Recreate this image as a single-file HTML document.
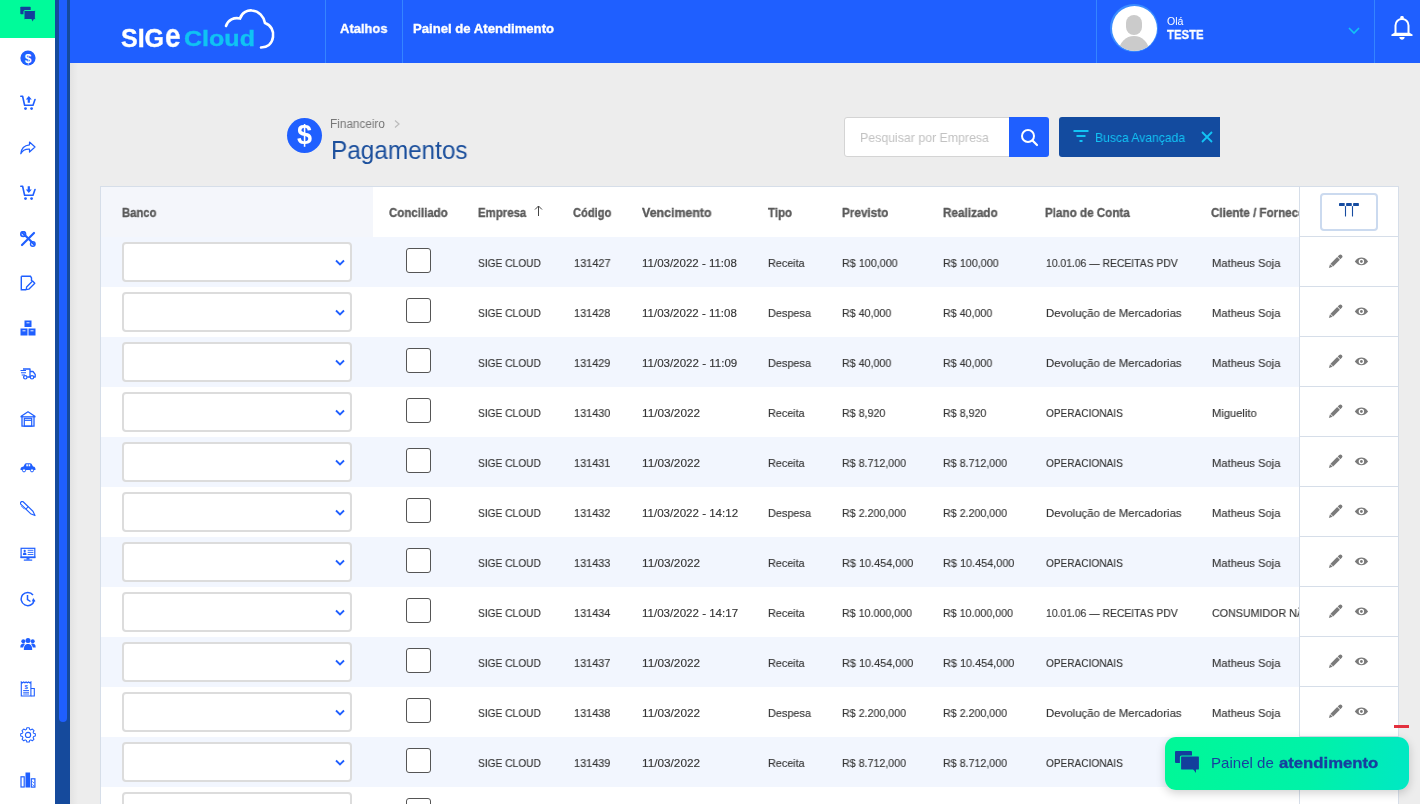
<!DOCTYPE html>
<html><head><meta charset="utf-8">
<style>
*{box-sizing:border-box;margin:0;padding:0}
html,body{width:1420px;height:804px;overflow:hidden;background:#ededed;font-family:"Liberation Sans",sans-serif;color:#444}
body{position:relative}
.abs{position:absolute}
.t{position:absolute;white-space:nowrap;line-height:1;transform-origin:0 0;will-change:transform}
.rb{-webkit-text-stroke:0.15px currentColor}
.xb{-webkit-text-stroke:0.35px currentColor}
</style></head><body>
<div class="abs" style="left:0;top:0;width:55px;height:804px;background:#fff"></div>
<div class="abs" style="left:0;top:0;width:55px;height:38px;background:#00fb9a"></div>
<svg class="abs" style="left:19.5px;top:50.3px" width="16" height="16" viewBox="0 0 16 16"><circle cx="8" cy="8" r="7.6" fill="#1f5fff"/><text x="8" y="12.6" font-family="Liberation Sans" font-weight="bold" font-size="12" fill="#fff" text-anchor="middle">$</text></svg>
<svg class="abs" style="left:19.5px;top:95.0px" width="16" height="16" viewBox="0 0 16 16"><path d="M0.8 1.3 H2.6 L4.6 10.2 H13 L15 4.5" fill="none" stroke="#1f5fff" stroke-width="1.6" stroke-linejoin="round" stroke-linecap="round"/><circle cx="5.5" cy="13.6" r="1.4" fill="#1f5fff"/><circle cx="11.6" cy="13.6" r="1.4" fill="#1f5fff"/><path d="M8.8 1 L5.8 4.4 H7.7 V7.8 H9.9 V4.4 H11.8Z" fill="#1f5fff"/></svg>
<svg class="abs" style="left:19.5px;top:140.4px" width="16" height="16" viewBox="0 0 16 16"><path d="M9.5 2 L15 7 L9.5 12 V9.2 C5 9 2.3 10.5 0.8 13.8 C1.2 8.5 4 5.3 9.5 4.8Z" fill="none" stroke="#1f5fff" stroke-width="1.2" stroke-linejoin="round"/></svg>
<svg class="abs" style="left:19.5px;top:185.2px" width="16" height="16" viewBox="0 0 16 16"><path d="M0.8 1.3 H2.6 L4.6 10.2 H13 L15 4.5" fill="none" stroke="#1f5fff" stroke-width="1.6" stroke-linejoin="round" stroke-linecap="round"/><circle cx="5.5" cy="13.6" r="1.4" fill="#1f5fff"/><circle cx="11.6" cy="13.6" r="1.4" fill="#1f5fff"/><path d="M8.8 8 L5.8 4.6 H7.7 V1.2 H9.9 V4.6 H11.8Z" fill="#1f5fff"/></svg>
<svg class="abs" style="left:19.5px;top:230.5px" width="16" height="16" viewBox="0 0 16 16"><path d="M2 14 L14 2" stroke="#1f5fff" stroke-width="2.2" stroke-linecap="round"/><path d="M2.5 1.8 L14 13.2" stroke="#1f5fff" stroke-width="2.2" stroke-linecap="round"/><circle cx="3.2" cy="3" r="2.4" fill="none" stroke="#1f5fff" stroke-width="1.6"/><circle cx="12.8" cy="12.9" r="2.3" fill="none" stroke="#1f5fff" stroke-width="1.4"/></svg>
<svg class="abs" style="left:19.5px;top:275.2px" width="16" height="16" viewBox="0 0 16 16"><path d="M1.3 1.3 H10.5 L11.5 3 V6 M6 14.7 H1.3 V1.3" fill="none" stroke="#1f5fff" stroke-width="1.4"/><path d="M6.2 14.5 L6.6 12 L12.6 6 L14.8 8.2 L8.8 14.2Z" fill="none" stroke="#1f5fff" stroke-width="1.3" stroke-linejoin="round"/></svg>
<svg class="abs" style="left:19.5px;top:320.4px" width="16" height="16" viewBox="0 0 16 16"><rect x="4.5" y="0.5" width="7" height="6.5" fill="#1f5fff"/><rect x="0.5" y="8.5" width="7" height="7" fill="#1f5fff"/><rect x="8.5" y="8.5" width="7" height="7" fill="#1f5fff"/><path d="M6.5 2.8 H9.5 M2.5 10.8 H5.5 M10.5 10.8 H13.5" stroke="#fff" stroke-width="0.9"/></svg>
<svg class="abs" style="left:19.5px;top:366.2px" width="16" height="16" viewBox="0 0 16 16"><path d="M3 3 H10 V11 M10 5.5 H13 L15.2 8.3 V11 H13.8 M10 11 H7.3 M3.6 11 H3" fill="none" stroke="#1f5fff" stroke-width="1.3" stroke-linejoin="round"/><circle cx="5.3" cy="11.3" r="1.7" fill="none" stroke="#1f5fff" stroke-width="1.2"/><circle cx="12" cy="11.3" r="1.7" fill="none" stroke="#1f5fff" stroke-width="1.2"/><path d="M0.5 4.5 H6 M1 6.8 H6 M1.7 9 H5" stroke="#1f5fff" stroke-width="1.1"/></svg>
<svg class="abs" style="left:19.5px;top:411.2px" width="16" height="16" viewBox="0 0 16 16"><path d="M0.8 5.5 L8 0.8 L15.2 5.5" fill="none" stroke="#1f5fff" stroke-width="1.3" stroke-linejoin="round"/><path d="M2 5 V15.2 H14 V5" fill="none" stroke="#1f5fff" stroke-width="1.3"/><rect x="4.3" y="7.3" width="7.4" height="7.9" fill="none" stroke="#1f5fff" stroke-width="1.2"/><path d="M4.3 9.3 H11.7" stroke="#1f5fff" stroke-width="1.2"/><path d="M0.5 5.8 H15.5" stroke="#1f5fff" stroke-width="1.2"/></svg>
<svg class="abs" style="left:19.5px;top:456.5px" width="16" height="16" viewBox="0 0 16 16"><path d="M0.5 13 C0.5 10.5 1 10 3.5 9.5 L5 6.8 C5.3 6.4 5.6 6.2 6.2 6.2 H10.2 C10.8 6.2 11.2 6.4 11.5 6.8 L13 9.5 C15 9.8 15.5 10.5 15.5 13Z" fill="#1f5fff"/><rect x="6.3" y="7.3" width="1.6" height="2" fill="#fff"/><rect x="8.6" y="7.3" width="1.6" height="2" fill="#fff"/><circle cx="4" cy="13.3" r="1.6" fill="#fff" stroke="#1f5fff" stroke-width="1"/><circle cx="12" cy="13.3" r="1.6" fill="#fff" stroke="#1f5fff" stroke-width="1"/></svg>
<svg class="abs" style="left:19.5px;top:501.4px" width="16" height="16" viewBox="0 0 16 16"><g transform="translate(2.2 2.2) rotate(44)"><path d="M0 -1.7 H13.3 L17.8 0 L13.3 1.7 H0 A1.7 1.7 0 0 1 0 -1.7Z" fill="none" stroke="#1f5fff" stroke-width="1.15" stroke-linejoin="round"/><path d="M6.8 -1.7 V1.7" stroke="#1f5fff" stroke-width="1"/><path d="M1 2.9 H5.8" stroke="#1f5fff" stroke-width="0.8" opacity="0.7"/></g></svg>
<svg class="abs" style="left:19.5px;top:546.3px" width="16" height="16" viewBox="0 0 16 16"><rect x="1.1" y="2.3" width="13.7" height="9.2" fill="none" stroke="#1f5fff" stroke-width="1.2"/><rect x="0.5" y="10.4" width="14.9" height="1.7" fill="#1f5fff"/><circle cx="4.7" cy="5" r="1.15" fill="#1f5fff"/><path d="M2.9 8.9 C2.9 7 3.6 6.4 4.7 6.4 C5.8 6.4 6.5 7 6.5 8.9Z" fill="#1f5fff"/><path d="M7.7 4.3 H13.4 M7.7 6.4 H13.4 M7.7 8.5 H13.4" stroke="#1f5fff" stroke-width="0.9"/><rect x="6.5" y="12.1" width="3" height="1.5" fill="#1f5fff"/><rect x="3.8" y="13.5" width="8.4" height="1.2" fill="#1f5fff"/></svg>
<svg class="abs" style="left:19.5px;top:591.0px" width="16" height="16" viewBox="0 0 16 16"><path d="M14.2 9.5 A6.6 6.6 0 1 1 13 4" fill="none" stroke="#1f5fff" stroke-width="1.5"/><path d="M13.2 7 L15.6 10.2 L11.8 10.5Z" fill="#1f5fff"/><path d="M7.5 4 V8.5 L10.5 10.5" fill="none" stroke="#1f5fff" stroke-width="1.5"/></svg>
<svg class="abs" style="left:19.5px;top:635.8px" width="16" height="16" viewBox="0 0 16 16"><circle cx="8" cy="4.5" r="2.5" fill="#1f5fff"/><circle cx="3.3" cy="5.2" r="2" fill="#1f5fff"/><circle cx="12.7" cy="5.2" r="2" fill="#1f5fff"/><path d="M3.8 14 C3.8 9.5 5.5 8 8 8 C10.5 8 12.2 9.5 12.2 14Z" fill="#1f5fff"/><path d="M0.3 11.5 C0.3 8.5 1.5 7.5 3.5 7.5 C4.5 7.5 5 8 5 8 C3.5 9.5 3.3 11 3.2 11.5Z" fill="#1f5fff"/><path d="M15.7 11.5 C15.7 8.5 14.5 7.5 12.5 7.5 C11.5 7.5 11 8 11 8 C12.5 9.5 12.7 11 12.8 11.5Z" fill="#1f5fff"/></svg>
<svg class="abs" style="left:19.5px;top:681.2px" width="16" height="16" viewBox="0 0 16 16"><path d="M1.3 1 L2.5 1.8 L3.7 1 L4.9 1.8 L6.1 1 L7.3 1.8 L8.5 1 L9.7 1.8 L10.9 1 V15 H1.3Z" fill="none" stroke="#1f5fff" stroke-width="1.1"/><path d="M10.9 7.5 H14.3 V15 H10.9" fill="none" stroke="#1f5fff" stroke-width="1.1"/><path d="M3.2 9.5 H9 M3.2 11.3 H9 M3.2 13 H9" stroke="#1f5fff" stroke-width="0.9"/><text x="6.1" y="7.6" font-family="Liberation Sans" font-size="6" font-weight="bold" fill="#1f5fff" text-anchor="middle">$</text></svg>
<svg class="abs" style="left:19.5px;top:726.5px" width="16" height="16" viewBox="0 0 16 16"><g transform="translate(0.5 0) scale(0.94 0.92)"><path d="M6.7 0.8 H9.3 L9.7 2.6 L11 3.2 L12.6 2.2 L14.4 4 L13.4 5.6 L14 6.9 L15.8 7.3 V9.9 L14 10.3 L13.4 11.6 L14.4 13.2 L12.6 15 L11 14 L9.7 14.6 L9.3 16.4 H6.7 L6.3 14.6 L5 14 L3.4 15 L1.6 13.2 L2.6 11.6 L2 10.3 L0.2 9.9 V7.3 L2 6.9 L2.6 5.6 L1.6 4 L3.4 2.2 L5 3.2 L6.3 2.6Z" fill="none" stroke="#1f5fff" stroke-width="1.1" stroke-linejoin="round"/><circle cx="8" cy="8.6" r="2.8" fill="none" stroke="#1f5fff" stroke-width="1.2"/></g></svg>
<svg class="abs" style="left:19.5px;top:771.5px" width="16" height="16" viewBox="0 0 16 16"><rect x="1" y="4.8" width="3.2" height="10.2" fill="none" stroke="#1f5fff" stroke-width="1.2"/><rect x="5.5" y="0.5" width="4.6" height="15" fill="#1f5fff"/><rect x="11.3" y="6.8" width="3.6" height="8.3" fill="none" stroke="#1f5fff" stroke-width="1.2"/><path d="M12.3 9.5 L14 11 M12.3 12.5 L14 14" stroke="#1f5fff" stroke-width="0.8"/></svg>
<svg class="abs" style="left:20px;top:5.5px" width="17" height="17" viewBox="0 0 17 17"><rect x="0.3" y="0.8" width="10.4" height="7.5" rx="0.8" fill="#133f9c"/><rect x="4" y="4.5" width="11.4" height="9" rx="0.8" fill="#133f9c" stroke="#00fb9a" stroke-width="1"/><path d="M11.5 13 L12.6 15.4 L13.8 13Z" fill="#133f9c"/></svg>
<div class="abs" style="left:55px;top:0;width:15px;height:804px;background:#154a9c"></div>
<div class="abs" style="left:59px;top:0;width:8px;height:722px;background:#1f5fff;border-radius:0 0 4px 4px"></div>
<div class="abs" style="left:70px;top:0;width:1350px;height:63px;background:#1f5fff"></div>
<div class="abs" style="left:325px;top:0;width:1px;height:63px;background:#3585ff"></div>
<div class="abs" style="left:402px;top:0;width:1px;height:63px;background:#3585ff"></div>
<div class="abs" style="left:1096px;top:0;width:1px;height:63px;background:#3585ff"></div>
<div class="abs" style="left:1374px;top:0;width:1px;height:63px;background:#3585ff"></div>
<div class="t xb" style="left:340.00px;top:22.00px;font-size:13px;font-weight:bold;color:#fff;transform:scaleX(0.9949);">Atalhos</div>
<div class="t xb" style="left:413.30px;top:22.00px;font-size:13px;font-weight:bold;color:#fff;transform:scaleX(1.0099);">Painel de Atendimento</div>
<div class="t xb" style="left:121.00px;top:25.54px;font-size:25px;font-weight:bold;color:#fff;">SIG</div>
<div class="t xb" style="left:165.30px;top:17.92px;font-size:34px;font-weight:bold;color:#fff;transform:scaleX(0.8214);">e</div>
<div class="t xb" style="left:184.00px;top:28.08px;font-size:22px;font-weight:bold;color:#10c3f3;transform:scaleX(1.1384);">Cloud</div>
<svg class="abs" style="left:215px;top:0.8px" width="70" height="55" viewBox="0 0 70 55"><path d="M11 25 C13 19 19 16 25 17.5 C27 11 33 9 37 9.5 C44 10 49 16 50 22 C56 24 59 30 58 36 C57 43 52 46.5 46 46.5" fill="none" stroke="#fff" stroke-width="2.6" stroke-linecap="round"/></svg>
<div class="abs" style="left:1110px;top:4px;width:48px;height:48px;border-radius:50%;background:#3a8cff"></div>
<div class="abs" style="left:1111.5px;top:5.5px;width:45px;height:45px;border-radius:50%;background:#fff;overflow:hidden"><div class="abs" style="left:14.5px;top:9.5px;width:16px;height:20px;border-radius:8px;background:#cbcbcb"></div><div class="abs" style="left:7.5px;top:30.5px;width:30px;height:22px;border-radius:15px 15px 0 0;background:#cbcbcb"></div></div>
<div class="t" style="left:1167.00px;top:17.04px;font-size:10px;color:#fff;transform:scaleX(1.0577);">Olá</div>
<div class="t xb" style="left:1166.50px;top:27.57px;font-size:13.5px;font-weight:bold;color:#fff;transform:scaleX(0.8407);">TESTE</div>
<svg class="abs" style="left:1346px;top:25px" width="16" height="12" viewBox="0 0 16 12"><path d="M3 3 L8 8 L13 3" fill="none" stroke="#12c3f5" stroke-width="1.6"/></svg>
<svg class="abs" style="left:1388px;top:13px" width="28" height="30" viewBox="0 0 28 30"><rect x="12.3" y="3" width="3.4" height="4" rx="1.2" fill="#fff"/><path d="M7.5 21.5 V12.5 C7.5 8.5 10.5 6 14 6 C17.5 6 20.5 8.5 20.5 12.5 V21.5" fill="none" stroke="#fff" stroke-width="2"/><path d="M4 22.2 L6.5 20.5 H21.5 L24 22.2 Z" fill="#fff" stroke="#fff" stroke-width="1.5" stroke-linejoin="round"/><path d="M11.3 24 H16.7 C16.5 25.8 15.3 26.8 14 26.8 C12.7 26.8 11.5 25.8 11.3 24Z" fill="#fff"/></svg>
<div class="abs" style="left:70px;top:63px;width:8px;height:741px;background:linear-gradient(to right,rgba(0,0,0,0.045),rgba(0,0,0,0))"></div>
<div class="abs" style="left:287px;top:118px;width:35px;height:35px;border-radius:50%;background:#1f5fff"></div>
<div class="t" style="left:295px;top:121px;font-size:27px;font-weight:bold;color:#fff;width:19px;text-align:center;line-height:28px">$</div>
<div class="t" style="left:330.00px;top:117.84px;font-size:12px;color:#777;transform:scaleX(0.9814);">Financeiro</div>
<svg class="abs" style="left:392px;top:118px" width="10" height="12" viewBox="0 0 10 12"><path d="M3 2.5 L7 6 L3 9.5" fill="none" stroke="#bbb" stroke-width="1.2"/></svg>
<div class="t" style="left:331.40px;top:138.14px;font-size:25px;color:#1b4f9c;transform:scaleX(0.9731);">Pagamentos</div>
<div class="abs" style="left:844px;top:117px;width:170px;height:40px;background:#fff;border:1px solid #d4d4d4;border-radius:3px"></div>
<div class="t" style="left:860.30px;top:131.00px;font-size:13px;color:#c2c2c2;transform:scaleX(0.9491);">Pesquisar por Empresa</div>
<div class="abs" style="left:1009px;top:117px;width:40px;height:40px;background:#1f5fff;border-radius:0 3px 3px 0"></div>
<svg class="abs" style="left:1016px;top:124px" width="26" height="26" viewBox="0 0 26 26"><circle cx="12" cy="12" r="6" fill="none" stroke="#fff" stroke-width="2"/><path d="M16.5 16.5 L21 21" stroke="#fff" stroke-width="2.2" stroke-linecap="round"/></svg>
<div class="abs" style="left:1059px;top:117px;width:161px;height:40px;background:#134b9f;border-radius:3px 0 0 3px"></div>
<svg class="abs" style="left:1072px;top:128px" width="20" height="18" viewBox="0 0 20 18"><path d="M1.5 3 H16.5 M4.5 8 H13.5 M7.5 13 H10.5" stroke="#12c3f5" stroke-width="2"/></svg>
<div class="t" style="left:1095.00px;top:131.00px;font-size:13px;color:#12c3f5;transform:scaleX(0.9311);">Busca Avançada</div>
<svg class="abs" style="left:1200px;top:130px" width="14" height="14" viewBox="0 0 14 14"><path d="M2 2 L12 12 M12 2 L2 12" stroke="#12c3f5" stroke-width="1.8"/></svg>
<div class="abs" style="left:100px;top:186px;width:1299px;height:700px;background:#fff;border:1px solid #d6dee9"></div>
<div class="abs" style="left:101px;top:187px;width:272px;height:50px;background:#f4f6fb"></div>
<div class="t xb" style="left:121.60px;top:206.72px;font-size:12.5px;font-weight:bold;color:#5a5a5a;transform:scaleX(0.9034);">Banco</div>
<div class="t xb" style="left:388.50px;top:206.72px;font-size:12.5px;font-weight:bold;color:#5a5a5a;transform:scaleX(0.9190);">Conciliado</div>
<div class="t xb" style="left:477.90px;top:206.72px;font-size:12.5px;font-weight:bold;color:#5a5a5a;transform:scaleX(0.9143);">Empresa</div>
<svg class="abs" style="left:532px;top:203px" width="12" height="14" viewBox="0 0 12 14"><path d="M6.5 3 V13 M3 6.5 L6.5 3 L10 6.5" fill="none" stroke="#444" stroke-width="1"/></svg>
<div class="t xb" style="left:573.40px;top:206.72px;font-size:12.5px;font-weight:bold;color:#5a5a5a;transform:scaleX(0.8894);">Código</div>
<div class="t xb" style="left:641.80px;top:206.72px;font-size:12.5px;font-weight:bold;color:#5a5a5a;transform:scaleX(0.9916);">Vencimento</div>
<div class="t xb" style="left:767.70px;top:206.72px;font-size:12.5px;font-weight:bold;color:#5a5a5a;transform:scaleX(0.9187);">Tipo</div>
<div class="t xb" style="left:841.80px;top:206.72px;font-size:12.5px;font-weight:bold;color:#5a5a5a;transform:scaleX(0.9389);">Previsto</div>
<div class="t xb" style="left:943.30px;top:206.72px;font-size:12.5px;font-weight:bold;color:#5a5a5a;transform:scaleX(0.9370);">Realizado</div>
<div class="t xb" style="left:1045.30px;top:206.72px;font-size:12.5px;font-weight:bold;color:#5a5a5a;transform:scaleX(0.9323);">Plano de Conta</div>
<div class="abs" style="left:1200px;top:187px;width:99px;height:50px;overflow:hidden"><div class="t xb" style="left:11.30px;top:19.72px;font-size:12.5px;font-weight:bold;color:#5a5a5a;transform:scaleX(0.9300);">Cliente / Fornecedor</div></div>
<div class="abs" style="left:101px;top:237px;width:1198px;height:50px;background:#f2f6fe"></div>
<div class="abs" style="left:122px;top:242px;width:230px;height:40px;background:#fff;border:2px solid #dcdcdc;border-radius:4px"></div>
<svg class="abs" style="left:333px;top:257px" width="14" height="12" viewBox="0 0 14 12"><path d="M3 3.5 L7 7.5 L11 3.5" fill="none" stroke="#1f5fff" stroke-width="1.8"/></svg>
<div class="abs" style="left:406px;top:248px;width:25px;height:25px;background:#fff;border:1px solid #555;border-radius:3px"></div>
<div class="t rb" style="left:477.50px;top:257.97px;font-size:11.5px;color:#353535;transform:scaleX(0.8851);">SIGE CLOUD</div>
<div class="t rb" style="left:573.50px;top:257.97px;font-size:11.5px;color:#353535;transform:scaleX(0.9543);">131427</div>
<div class="t rb" style="left:641.70px;top:257.97px;font-size:11.5px;color:#353535;">11/03/2022 - 11:08</div>
<div class="t rb" style="left:767.50px;top:257.97px;font-size:11.5px;color:#353535;transform:scaleX(0.9400);">Receita</div>
<div class="t rb" style="left:841.50px;top:257.97px;font-size:11.5px;color:#353535;transform:scaleX(0.9368);">R$ 100,000</div>
<div class="t rb" style="left:943.30px;top:257.97px;font-size:11.5px;color:#353535;transform:scaleX(0.9368);">R$ 100,000</div>
<div class="t rb" style="left:1045.50px;top:257.97px;font-size:11.5px;color:#353535;transform:scaleX(0.9010);">10.01.06 — RECEITAS PDV</div>
<div class="abs" style="left:1200px;top:237px;width:99px;height:50px;overflow:hidden"><div class="t rb" style="left:11.50px;top:20.97px;font-size:11.5px;color:#353535;transform:scaleX(0.9733);">Matheus Soja</div></div>
<div class="abs" style="left:122px;top:292px;width:230px;height:40px;background:#fff;border:2px solid #dcdcdc;border-radius:4px"></div>
<svg class="abs" style="left:333px;top:307px" width="14" height="12" viewBox="0 0 14 12"><path d="M3 3.5 L7 7.5 L11 3.5" fill="none" stroke="#1f5fff" stroke-width="1.8"/></svg>
<div class="abs" style="left:406px;top:298px;width:25px;height:25px;background:#fff;border:1px solid #555;border-radius:3px"></div>
<div class="t rb" style="left:477.50px;top:307.97px;font-size:11.5px;color:#353535;transform:scaleX(0.8851);">SIGE CLOUD</div>
<div class="t rb" style="left:573.50px;top:307.97px;font-size:11.5px;color:#353535;transform:scaleX(0.9480);">131428</div>
<div class="t rb" style="left:641.70px;top:307.97px;font-size:11.5px;color:#353535;">11/03/2022 - 11:08</div>
<div class="t rb" style="left:767.50px;top:307.97px;font-size:11.5px;color:#353535;transform:scaleX(0.9466);">Despesa</div>
<div class="t rb" style="left:841.50px;top:307.97px;font-size:11.5px;color:#353535;transform:scaleX(0.9280);">R$ 40,000</div>
<div class="t rb" style="left:943.30px;top:307.97px;font-size:11.5px;color:#353535;transform:scaleX(0.9280);">R$ 40,000</div>
<div class="t rb" style="left:1045.50px;top:307.97px;font-size:11.5px;color:#353535;transform:scaleX(0.9906);">Devolução de Mercadorias</div>
<div class="abs" style="left:1200px;top:287px;width:99px;height:50px;overflow:hidden"><div class="t rb" style="left:11.50px;top:20.97px;font-size:11.5px;color:#353535;transform:scaleX(0.9733);">Matheus Soja</div></div>
<div class="abs" style="left:101px;top:337px;width:1198px;height:50px;background:#f2f6fe"></div>
<div class="abs" style="left:122px;top:342px;width:230px;height:40px;background:#fff;border:2px solid #dcdcdc;border-radius:4px"></div>
<svg class="abs" style="left:333px;top:357px" width="14" height="12" viewBox="0 0 14 12"><path d="M3 3.5 L7 7.5 L11 3.5" fill="none" stroke="#1f5fff" stroke-width="1.8"/></svg>
<div class="abs" style="left:406px;top:348px;width:25px;height:25px;background:#fff;border:1px solid #555;border-radius:3px"></div>
<div class="t rb" style="left:477.50px;top:357.97px;font-size:11.5px;color:#353535;transform:scaleX(0.8851);">SIGE CLOUD</div>
<div class="t rb" style="left:573.50px;top:357.97px;font-size:11.5px;color:#353535;transform:scaleX(0.9480);">131429</div>
<div class="t rb" style="left:641.70px;top:357.97px;font-size:11.5px;color:#353535;transform:scaleX(1.0040);">11/03/2022 - 11:09</div>
<div class="t rb" style="left:767.50px;top:357.97px;font-size:11.5px;color:#353535;transform:scaleX(0.9466);">Despesa</div>
<div class="t rb" style="left:841.50px;top:357.97px;font-size:11.5px;color:#353535;transform:scaleX(0.9280);">R$ 40,000</div>
<div class="t rb" style="left:943.30px;top:357.97px;font-size:11.5px;color:#353535;transform:scaleX(0.9280);">R$ 40,000</div>
<div class="t rb" style="left:1045.50px;top:357.97px;font-size:11.5px;color:#353535;transform:scaleX(0.9906);">Devolução de Mercadorias</div>
<div class="abs" style="left:1200px;top:337px;width:99px;height:50px;overflow:hidden"><div class="t rb" style="left:11.50px;top:20.97px;font-size:11.5px;color:#353535;transform:scaleX(0.9733);">Matheus Soja</div></div>
<div class="abs" style="left:122px;top:392px;width:230px;height:40px;background:#fff;border:2px solid #dcdcdc;border-radius:4px"></div>
<svg class="abs" style="left:333px;top:407px" width="14" height="12" viewBox="0 0 14 12"><path d="M3 3.5 L7 7.5 L11 3.5" fill="none" stroke="#1f5fff" stroke-width="1.8"/></svg>
<div class="abs" style="left:406px;top:398px;width:25px;height:25px;background:#fff;border:1px solid #555;border-radius:3px"></div>
<div class="t rb" style="left:477.50px;top:407.97px;font-size:11.5px;color:#353535;transform:scaleX(0.8851);">SIGE CLOUD</div>
<div class="t rb" style="left:573.50px;top:407.97px;font-size:11.5px;color:#353535;transform:scaleX(0.9480);">131430</div>
<div class="t rb" style="left:641.70px;top:407.97px;font-size:11.5px;color:#353535;transform:scaleX(1.0230);">11/03/2022</div>
<div class="t rb" style="left:767.50px;top:407.97px;font-size:11.5px;color:#353535;transform:scaleX(0.9400);">Receita</div>
<div class="t rb" style="left:841.50px;top:407.97px;font-size:11.5px;color:#353535;transform:scaleX(0.9280);">R$ 8,920</div>
<div class="t rb" style="left:943.30px;top:407.97px;font-size:11.5px;color:#353535;transform:scaleX(0.9280);">R$ 8,920</div>
<div class="t rb" style="left:1045.50px;top:407.97px;font-size:11.5px;color:#353535;transform:scaleX(0.8770);">OPERACIONAIS</div>
<div class="abs" style="left:1200px;top:387px;width:99px;height:50px;overflow:hidden"><div class="t rb" style="left:11.50px;top:20.97px;font-size:11.5px;color:#353535;transform:scaleX(0.9690);">Miguelito</div></div>
<div class="abs" style="left:101px;top:437px;width:1198px;height:50px;background:#f2f6fe"></div>
<div class="abs" style="left:122px;top:442px;width:230px;height:40px;background:#fff;border:2px solid #dcdcdc;border-radius:4px"></div>
<svg class="abs" style="left:333px;top:457px" width="14" height="12" viewBox="0 0 14 12"><path d="M3 3.5 L7 7.5 L11 3.5" fill="none" stroke="#1f5fff" stroke-width="1.8"/></svg>
<div class="abs" style="left:406px;top:448px;width:25px;height:25px;background:#fff;border:1px solid #555;border-radius:3px"></div>
<div class="t rb" style="left:477.50px;top:457.97px;font-size:11.5px;color:#353535;transform:scaleX(0.8851);">SIGE CLOUD</div>
<div class="t rb" style="left:573.50px;top:457.97px;font-size:11.5px;color:#353535;transform:scaleX(0.9480);">131431</div>
<div class="t rb" style="left:641.70px;top:457.97px;font-size:11.5px;color:#353535;transform:scaleX(1.0230);">11/03/2022</div>
<div class="t rb" style="left:767.50px;top:457.97px;font-size:11.5px;color:#353535;transform:scaleX(0.9400);">Receita</div>
<div class="t rb" style="left:841.50px;top:457.97px;font-size:11.5px;color:#353535;transform:scaleX(0.9280);">R$ 8.712,000</div>
<div class="t rb" style="left:943.30px;top:457.97px;font-size:11.5px;color:#353535;transform:scaleX(0.9280);">R$ 8.712,000</div>
<div class="t rb" style="left:1045.50px;top:457.97px;font-size:11.5px;color:#353535;transform:scaleX(0.8770);">OPERACIONAIS</div>
<div class="abs" style="left:1200px;top:437px;width:99px;height:50px;overflow:hidden"><div class="t rb" style="left:11.50px;top:20.97px;font-size:11.5px;color:#353535;transform:scaleX(0.9733);">Matheus Soja</div></div>
<div class="abs" style="left:122px;top:492px;width:230px;height:40px;background:#fff;border:2px solid #dcdcdc;border-radius:4px"></div>
<svg class="abs" style="left:333px;top:507px" width="14" height="12" viewBox="0 0 14 12"><path d="M3 3.5 L7 7.5 L11 3.5" fill="none" stroke="#1f5fff" stroke-width="1.8"/></svg>
<div class="abs" style="left:406px;top:498px;width:25px;height:25px;background:#fff;border:1px solid #555;border-radius:3px"></div>
<div class="t rb" style="left:477.50px;top:507.97px;font-size:11.5px;color:#353535;transform:scaleX(0.8851);">SIGE CLOUD</div>
<div class="t rb" style="left:573.50px;top:507.97px;font-size:11.5px;color:#353535;transform:scaleX(0.9480);">131432</div>
<div class="t rb" style="left:641.70px;top:507.97px;font-size:11.5px;color:#353535;transform:scaleX(1.0040);">11/03/2022 - 14:12</div>
<div class="t rb" style="left:767.50px;top:507.97px;font-size:11.5px;color:#353535;transform:scaleX(0.9466);">Despesa</div>
<div class="t rb" style="left:841.50px;top:507.97px;font-size:11.5px;color:#353535;transform:scaleX(0.9280);">R$ 2.200,000</div>
<div class="t rb" style="left:943.30px;top:507.97px;font-size:11.5px;color:#353535;transform:scaleX(0.9280);">R$ 2.200,000</div>
<div class="t rb" style="left:1045.50px;top:507.97px;font-size:11.5px;color:#353535;transform:scaleX(0.9906);">Devolução de Mercadorias</div>
<div class="abs" style="left:1200px;top:487px;width:99px;height:50px;overflow:hidden"><div class="t rb" style="left:11.50px;top:20.97px;font-size:11.5px;color:#353535;transform:scaleX(0.9733);">Matheus Soja</div></div>
<div class="abs" style="left:101px;top:537px;width:1198px;height:50px;background:#f2f6fe"></div>
<div class="abs" style="left:122px;top:542px;width:230px;height:40px;background:#fff;border:2px solid #dcdcdc;border-radius:4px"></div>
<svg class="abs" style="left:333px;top:557px" width="14" height="12" viewBox="0 0 14 12"><path d="M3 3.5 L7 7.5 L11 3.5" fill="none" stroke="#1f5fff" stroke-width="1.8"/></svg>
<div class="abs" style="left:406px;top:548px;width:25px;height:25px;background:#fff;border:1px solid #555;border-radius:3px"></div>
<div class="t rb" style="left:477.50px;top:557.97px;font-size:11.5px;color:#353535;transform:scaleX(0.8851);">SIGE CLOUD</div>
<div class="t rb" style="left:573.50px;top:557.97px;font-size:11.5px;color:#353535;transform:scaleX(0.9480);">131433</div>
<div class="t rb" style="left:641.70px;top:557.97px;font-size:11.5px;color:#353535;transform:scaleX(1.0230);">11/03/2022</div>
<div class="t rb" style="left:767.50px;top:557.97px;font-size:11.5px;color:#353535;transform:scaleX(0.9400);">Receita</div>
<div class="t rb" style="left:841.50px;top:557.97px;font-size:11.5px;color:#353535;transform:scaleX(0.9464);">R$ 10.454,000</div>
<div class="t rb" style="left:943.30px;top:557.97px;font-size:11.5px;color:#353535;transform:scaleX(0.9464);">R$ 10.454,000</div>
<div class="t rb" style="left:1045.50px;top:557.97px;font-size:11.5px;color:#353535;transform:scaleX(0.8770);">OPERACIONAIS</div>
<div class="abs" style="left:1200px;top:537px;width:99px;height:50px;overflow:hidden"><div class="t rb" style="left:11.50px;top:20.97px;font-size:11.5px;color:#353535;transform:scaleX(0.9733);">Matheus Soja</div></div>
<div class="abs" style="left:122px;top:592px;width:230px;height:40px;background:#fff;border:2px solid #dcdcdc;border-radius:4px"></div>
<svg class="abs" style="left:333px;top:607px" width="14" height="12" viewBox="0 0 14 12"><path d="M3 3.5 L7 7.5 L11 3.5" fill="none" stroke="#1f5fff" stroke-width="1.8"/></svg>
<div class="abs" style="left:406px;top:598px;width:25px;height:25px;background:#fff;border:1px solid #555;border-radius:3px"></div>
<div class="t rb" style="left:477.50px;top:607.97px;font-size:11.5px;color:#353535;transform:scaleX(0.8851);">SIGE CLOUD</div>
<div class="t rb" style="left:573.50px;top:607.97px;font-size:11.5px;color:#353535;transform:scaleX(0.9480);">131434</div>
<div class="t rb" style="left:641.70px;top:607.97px;font-size:11.5px;color:#353535;transform:scaleX(1.0040);">11/03/2022 - 14:17</div>
<div class="t rb" style="left:767.50px;top:607.97px;font-size:11.5px;color:#353535;transform:scaleX(0.9400);">Receita</div>
<div class="t rb" style="left:841.50px;top:607.97px;font-size:11.5px;color:#353535;transform:scaleX(0.9280);">R$ 10.000,000</div>
<div class="t rb" style="left:943.30px;top:607.97px;font-size:11.5px;color:#353535;transform:scaleX(0.9280);">R$ 10.000,000</div>
<div class="t rb" style="left:1045.50px;top:607.97px;font-size:11.5px;color:#353535;transform:scaleX(0.9010);">10.01.06 — RECEITAS PDV</div>
<div class="abs" style="left:1200px;top:587px;width:99px;height:50px;overflow:hidden"><div class="t rb" style="left:11.50px;top:20.97px;font-size:11.5px;color:#353535;transform:scaleX(0.9300);">CONSUMIDOR NÃO IDENTIFICADO</div></div>
<div class="abs" style="left:101px;top:637px;width:1198px;height:50px;background:#f2f6fe"></div>
<div class="abs" style="left:122px;top:642px;width:230px;height:40px;background:#fff;border:2px solid #dcdcdc;border-radius:4px"></div>
<svg class="abs" style="left:333px;top:657px" width="14" height="12" viewBox="0 0 14 12"><path d="M3 3.5 L7 7.5 L11 3.5" fill="none" stroke="#1f5fff" stroke-width="1.8"/></svg>
<div class="abs" style="left:406px;top:648px;width:25px;height:25px;background:#fff;border:1px solid #555;border-radius:3px"></div>
<div class="t rb" style="left:477.50px;top:657.97px;font-size:11.5px;color:#353535;transform:scaleX(0.8851);">SIGE CLOUD</div>
<div class="t rb" style="left:573.50px;top:657.97px;font-size:11.5px;color:#353535;transform:scaleX(0.9480);">131437</div>
<div class="t rb" style="left:641.70px;top:657.97px;font-size:11.5px;color:#353535;transform:scaleX(1.0230);">11/03/2022</div>
<div class="t rb" style="left:767.50px;top:657.97px;font-size:11.5px;color:#353535;transform:scaleX(0.9400);">Receita</div>
<div class="t rb" style="left:841.50px;top:657.97px;font-size:11.5px;color:#353535;transform:scaleX(0.9464);">R$ 10.454,000</div>
<div class="t rb" style="left:943.30px;top:657.97px;font-size:11.5px;color:#353535;transform:scaleX(0.9464);">R$ 10.454,000</div>
<div class="t rb" style="left:1045.50px;top:657.97px;font-size:11.5px;color:#353535;transform:scaleX(0.8770);">OPERACIONAIS</div>
<div class="abs" style="left:1200px;top:637px;width:99px;height:50px;overflow:hidden"><div class="t rb" style="left:11.50px;top:20.97px;font-size:11.5px;color:#353535;transform:scaleX(0.9733);">Matheus Soja</div></div>
<div class="abs" style="left:122px;top:692px;width:230px;height:40px;background:#fff;border:2px solid #dcdcdc;border-radius:4px"></div>
<svg class="abs" style="left:333px;top:707px" width="14" height="12" viewBox="0 0 14 12"><path d="M3 3.5 L7 7.5 L11 3.5" fill="none" stroke="#1f5fff" stroke-width="1.8"/></svg>
<div class="abs" style="left:406px;top:698px;width:25px;height:25px;background:#fff;border:1px solid #555;border-radius:3px"></div>
<div class="t rb" style="left:477.50px;top:707.97px;font-size:11.5px;color:#353535;transform:scaleX(0.8851);">SIGE CLOUD</div>
<div class="t rb" style="left:573.50px;top:707.97px;font-size:11.5px;color:#353535;transform:scaleX(0.9480);">131438</div>
<div class="t rb" style="left:641.70px;top:707.97px;font-size:11.5px;color:#353535;transform:scaleX(1.0230);">11/03/2022</div>
<div class="t rb" style="left:767.50px;top:707.97px;font-size:11.5px;color:#353535;transform:scaleX(0.9466);">Despesa</div>
<div class="t rb" style="left:841.50px;top:707.97px;font-size:11.5px;color:#353535;transform:scaleX(0.9280);">R$ 2.200,000</div>
<div class="t rb" style="left:943.30px;top:707.97px;font-size:11.5px;color:#353535;transform:scaleX(0.9280);">R$ 2.200,000</div>
<div class="t rb" style="left:1045.50px;top:707.97px;font-size:11.5px;color:#353535;transform:scaleX(0.9906);">Devolução de Mercadorias</div>
<div class="abs" style="left:1200px;top:687px;width:99px;height:50px;overflow:hidden"><div class="t rb" style="left:11.50px;top:20.97px;font-size:11.5px;color:#353535;transform:scaleX(0.9733);">Matheus Soja</div></div>
<div class="abs" style="left:101px;top:737px;width:1198px;height:50px;background:#f2f6fe"></div>
<div class="abs" style="left:122px;top:742px;width:230px;height:40px;background:#fff;border:2px solid #dcdcdc;border-radius:4px"></div>
<svg class="abs" style="left:333px;top:757px" width="14" height="12" viewBox="0 0 14 12"><path d="M3 3.5 L7 7.5 L11 3.5" fill="none" stroke="#1f5fff" stroke-width="1.8"/></svg>
<div class="abs" style="left:406px;top:748px;width:25px;height:25px;background:#fff;border:1px solid #555;border-radius:3px"></div>
<div class="t rb" style="left:477.50px;top:757.97px;font-size:11.5px;color:#353535;transform:scaleX(0.8851);">SIGE CLOUD</div>
<div class="t rb" style="left:573.50px;top:757.97px;font-size:11.5px;color:#353535;transform:scaleX(0.9480);">131439</div>
<div class="t rb" style="left:641.70px;top:757.97px;font-size:11.5px;color:#353535;transform:scaleX(1.0230);">11/03/2022</div>
<div class="t rb" style="left:767.50px;top:757.97px;font-size:11.5px;color:#353535;transform:scaleX(0.9400);">Receita</div>
<div class="t rb" style="left:841.50px;top:757.97px;font-size:11.5px;color:#353535;transform:scaleX(0.9280);">R$ 8.712,000</div>
<div class="t rb" style="left:943.30px;top:757.97px;font-size:11.5px;color:#353535;transform:scaleX(0.9280);">R$ 8.712,000</div>
<div class="t rb" style="left:1045.50px;top:757.97px;font-size:11.5px;color:#353535;transform:scaleX(0.8770);">OPERACIONAIS</div>
<div class="abs" style="left:1200px;top:737px;width:99px;height:50px;overflow:hidden"><div class="t rb" style="left:11.50px;top:20.97px;font-size:11.5px;color:#353535;transform:scaleX(0.9733);">Matheus Soja</div></div>
<div class="abs" style="left:122px;top:792px;width:230px;height:40px;background:#fff;border:2px solid #dcdcdc;border-radius:4px"></div>
<svg class="abs" style="left:333px;top:807px" width="14" height="12" viewBox="0 0 14 12"><path d="M3 3.5 L7 7.5 L11 3.5" fill="none" stroke="#1f5fff" stroke-width="1.8"/></svg>
<div class="abs" style="left:406px;top:798px;width:25px;height:25px;background:#fff;border:1px solid #555;border-radius:3px"></div>
<div class="t rb" style="left:477.50px;top:807.97px;font-size:11.5px;color:#353535;transform:scaleX(0.8851);">SIGE CLOUD</div>
<div class="t rb" style="left:573.50px;top:807.97px;font-size:11.5px;color:#353535;transform:scaleX(0.9480);">131440</div>
<div class="t rb" style="left:641.70px;top:807.97px;font-size:11.5px;color:#353535;transform:scaleX(1.0230);">11/03/2022</div>
<div class="t rb" style="left:767.50px;top:807.97px;font-size:11.5px;color:#353535;transform:scaleX(0.9400);">Receita</div>
<div class="t rb" style="left:841.50px;top:807.97px;font-size:11.5px;color:#353535;transform:scaleX(0.9280);">R$ 8.712,000</div>
<div class="t rb" style="left:943.30px;top:807.97px;font-size:11.5px;color:#353535;transform:scaleX(0.9280);">R$ 8.712,000</div>
<div class="t rb" style="left:1045.50px;top:807.97px;font-size:11.5px;color:#353535;transform:scaleX(0.8770);">OPERACIONAIS</div>
<div class="abs" style="left:1200px;top:787px;width:99px;height:50px;overflow:hidden"><div class="t rb" style="left:11.50px;top:20.97px;font-size:11.5px;color:#353535;transform:scaleX(0.9733);">Matheus Soja</div></div>
<div class="abs" style="left:1299px;top:187px;width:99px;height:617px;background:#fff;border-left:1px solid #d6dee9"></div>
<div class="abs" style="left:1300px;top:236px;width:98px;height:1px;background:#d6dee9"></div>
<div class="abs" style="left:1300px;top:286px;width:98px;height:1px;background:#d6dee9"></div>
<div class="abs" style="left:1300px;top:336px;width:98px;height:1px;background:#d6dee9"></div>
<div class="abs" style="left:1300px;top:386px;width:98px;height:1px;background:#d6dee9"></div>
<div class="abs" style="left:1300px;top:436px;width:98px;height:1px;background:#d6dee9"></div>
<div class="abs" style="left:1300px;top:486px;width:98px;height:1px;background:#d6dee9"></div>
<div class="abs" style="left:1300px;top:536px;width:98px;height:1px;background:#d6dee9"></div>
<div class="abs" style="left:1300px;top:586px;width:98px;height:1px;background:#d6dee9"></div>
<div class="abs" style="left:1300px;top:636px;width:98px;height:1px;background:#d6dee9"></div>
<div class="abs" style="left:1300px;top:686px;width:98px;height:1px;background:#d6dee9"></div>
<div class="abs" style="left:1300px;top:736px;width:98px;height:1px;background:#d6dee9"></div>
<div class="abs" style="left:1300px;top:786px;width:98px;height:1px;background:#d6dee9"></div>
<div class="abs" style="left:1300px;top:836px;width:98px;height:1px;background:#d6dee9"></div>
<div class="abs" style="left:1320px;top:193px;width:58px;height:38px;border:2px solid #cbdaef;border-radius:4px;background:#fff"></div>
<svg class="abs" style="left:1335px;top:200px" width="28" height="20" viewBox="0 0 28 20"><g fill="#164ca0"><rect x="4" y="3" width="5.7" height="2.9" rx="0.4"/><rect x="11.1" y="3" width="5.7" height="2.9" rx="0.4"/><rect x="18.1" y="3" width="5.8" height="2.9" rx="0.4"/><rect x="9.95" y="5.9" width="1.1" height="10.6" rx="0.5"/><rect x="16.95" y="5.9" width="1.1" height="10.6" rx="0.5"/></g></svg>
<svg class="abs" style="left:1326px;top:253px" width="18" height="18" viewBox="0 0 18 18"><g transform="translate(2.9 14.9) rotate(-44.5)" fill="#7a7a7a"><path d="M0 0 L3.4 -1.9 V1.9Z"/><rect x="4.1" y="-1.9" width="9.4" height="3.8"/><path d="M14.2 -1.9 H16.3 A1.9 1.9 0 0 1 16.3 1.9 H14.2Z"/></g></svg>
<svg class="abs" style="left:1353px;top:254px" width="17" height="16" viewBox="0 0 17 16"><path d="M1.8 7.5 C4 4.6 6 3.6 8.45 3.6 C10.9 3.6 12.9 4.6 15.1 7.5 C12.9 10.4 10.9 11.3 8.45 11.3 C6 11.3 4 10.4 1.8 7.5Z" fill="#7a7a7a"/><circle cx="8.4" cy="7.5" r="2.7" fill="#fff"/><circle cx="8.4" cy="7.5" r="1.4" fill="#7a7a7a"/></svg>
<svg class="abs" style="left:1326px;top:303px" width="18" height="18" viewBox="0 0 18 18"><g transform="translate(2.9 14.9) rotate(-44.5)" fill="#7a7a7a"><path d="M0 0 L3.4 -1.9 V1.9Z"/><rect x="4.1" y="-1.9" width="9.4" height="3.8"/><path d="M14.2 -1.9 H16.3 A1.9 1.9 0 0 1 16.3 1.9 H14.2Z"/></g></svg>
<svg class="abs" style="left:1353px;top:304px" width="17" height="16" viewBox="0 0 17 16"><path d="M1.8 7.5 C4 4.6 6 3.6 8.45 3.6 C10.9 3.6 12.9 4.6 15.1 7.5 C12.9 10.4 10.9 11.3 8.45 11.3 C6 11.3 4 10.4 1.8 7.5Z" fill="#7a7a7a"/><circle cx="8.4" cy="7.5" r="2.7" fill="#fff"/><circle cx="8.4" cy="7.5" r="1.4" fill="#7a7a7a"/></svg>
<svg class="abs" style="left:1326px;top:353px" width="18" height="18" viewBox="0 0 18 18"><g transform="translate(2.9 14.9) rotate(-44.5)" fill="#7a7a7a"><path d="M0 0 L3.4 -1.9 V1.9Z"/><rect x="4.1" y="-1.9" width="9.4" height="3.8"/><path d="M14.2 -1.9 H16.3 A1.9 1.9 0 0 1 16.3 1.9 H14.2Z"/></g></svg>
<svg class="abs" style="left:1353px;top:354px" width="17" height="16" viewBox="0 0 17 16"><path d="M1.8 7.5 C4 4.6 6 3.6 8.45 3.6 C10.9 3.6 12.9 4.6 15.1 7.5 C12.9 10.4 10.9 11.3 8.45 11.3 C6 11.3 4 10.4 1.8 7.5Z" fill="#7a7a7a"/><circle cx="8.4" cy="7.5" r="2.7" fill="#fff"/><circle cx="8.4" cy="7.5" r="1.4" fill="#7a7a7a"/></svg>
<svg class="abs" style="left:1326px;top:403px" width="18" height="18" viewBox="0 0 18 18"><g transform="translate(2.9 14.9) rotate(-44.5)" fill="#7a7a7a"><path d="M0 0 L3.4 -1.9 V1.9Z"/><rect x="4.1" y="-1.9" width="9.4" height="3.8"/><path d="M14.2 -1.9 H16.3 A1.9 1.9 0 0 1 16.3 1.9 H14.2Z"/></g></svg>
<svg class="abs" style="left:1353px;top:404px" width="17" height="16" viewBox="0 0 17 16"><path d="M1.8 7.5 C4 4.6 6 3.6 8.45 3.6 C10.9 3.6 12.9 4.6 15.1 7.5 C12.9 10.4 10.9 11.3 8.45 11.3 C6 11.3 4 10.4 1.8 7.5Z" fill="#7a7a7a"/><circle cx="8.4" cy="7.5" r="2.7" fill="#fff"/><circle cx="8.4" cy="7.5" r="1.4" fill="#7a7a7a"/></svg>
<svg class="abs" style="left:1326px;top:453px" width="18" height="18" viewBox="0 0 18 18"><g transform="translate(2.9 14.9) rotate(-44.5)" fill="#7a7a7a"><path d="M0 0 L3.4 -1.9 V1.9Z"/><rect x="4.1" y="-1.9" width="9.4" height="3.8"/><path d="M14.2 -1.9 H16.3 A1.9 1.9 0 0 1 16.3 1.9 H14.2Z"/></g></svg>
<svg class="abs" style="left:1353px;top:454px" width="17" height="16" viewBox="0 0 17 16"><path d="M1.8 7.5 C4 4.6 6 3.6 8.45 3.6 C10.9 3.6 12.9 4.6 15.1 7.5 C12.9 10.4 10.9 11.3 8.45 11.3 C6 11.3 4 10.4 1.8 7.5Z" fill="#7a7a7a"/><circle cx="8.4" cy="7.5" r="2.7" fill="#fff"/><circle cx="8.4" cy="7.5" r="1.4" fill="#7a7a7a"/></svg>
<svg class="abs" style="left:1326px;top:503px" width="18" height="18" viewBox="0 0 18 18"><g transform="translate(2.9 14.9) rotate(-44.5)" fill="#7a7a7a"><path d="M0 0 L3.4 -1.9 V1.9Z"/><rect x="4.1" y="-1.9" width="9.4" height="3.8"/><path d="M14.2 -1.9 H16.3 A1.9 1.9 0 0 1 16.3 1.9 H14.2Z"/></g></svg>
<svg class="abs" style="left:1353px;top:504px" width="17" height="16" viewBox="0 0 17 16"><path d="M1.8 7.5 C4 4.6 6 3.6 8.45 3.6 C10.9 3.6 12.9 4.6 15.1 7.5 C12.9 10.4 10.9 11.3 8.45 11.3 C6 11.3 4 10.4 1.8 7.5Z" fill="#7a7a7a"/><circle cx="8.4" cy="7.5" r="2.7" fill="#fff"/><circle cx="8.4" cy="7.5" r="1.4" fill="#7a7a7a"/></svg>
<svg class="abs" style="left:1326px;top:553px" width="18" height="18" viewBox="0 0 18 18"><g transform="translate(2.9 14.9) rotate(-44.5)" fill="#7a7a7a"><path d="M0 0 L3.4 -1.9 V1.9Z"/><rect x="4.1" y="-1.9" width="9.4" height="3.8"/><path d="M14.2 -1.9 H16.3 A1.9 1.9 0 0 1 16.3 1.9 H14.2Z"/></g></svg>
<svg class="abs" style="left:1353px;top:554px" width="17" height="16" viewBox="0 0 17 16"><path d="M1.8 7.5 C4 4.6 6 3.6 8.45 3.6 C10.9 3.6 12.9 4.6 15.1 7.5 C12.9 10.4 10.9 11.3 8.45 11.3 C6 11.3 4 10.4 1.8 7.5Z" fill="#7a7a7a"/><circle cx="8.4" cy="7.5" r="2.7" fill="#fff"/><circle cx="8.4" cy="7.5" r="1.4" fill="#7a7a7a"/></svg>
<svg class="abs" style="left:1326px;top:603px" width="18" height="18" viewBox="0 0 18 18"><g transform="translate(2.9 14.9) rotate(-44.5)" fill="#7a7a7a"><path d="M0 0 L3.4 -1.9 V1.9Z"/><rect x="4.1" y="-1.9" width="9.4" height="3.8"/><path d="M14.2 -1.9 H16.3 A1.9 1.9 0 0 1 16.3 1.9 H14.2Z"/></g></svg>
<svg class="abs" style="left:1353px;top:604px" width="17" height="16" viewBox="0 0 17 16"><path d="M1.8 7.5 C4 4.6 6 3.6 8.45 3.6 C10.9 3.6 12.9 4.6 15.1 7.5 C12.9 10.4 10.9 11.3 8.45 11.3 C6 11.3 4 10.4 1.8 7.5Z" fill="#7a7a7a"/><circle cx="8.4" cy="7.5" r="2.7" fill="#fff"/><circle cx="8.4" cy="7.5" r="1.4" fill="#7a7a7a"/></svg>
<svg class="abs" style="left:1326px;top:653px" width="18" height="18" viewBox="0 0 18 18"><g transform="translate(2.9 14.9) rotate(-44.5)" fill="#7a7a7a"><path d="M0 0 L3.4 -1.9 V1.9Z"/><rect x="4.1" y="-1.9" width="9.4" height="3.8"/><path d="M14.2 -1.9 H16.3 A1.9 1.9 0 0 1 16.3 1.9 H14.2Z"/></g></svg>
<svg class="abs" style="left:1353px;top:654px" width="17" height="16" viewBox="0 0 17 16"><path d="M1.8 7.5 C4 4.6 6 3.6 8.45 3.6 C10.9 3.6 12.9 4.6 15.1 7.5 C12.9 10.4 10.9 11.3 8.45 11.3 C6 11.3 4 10.4 1.8 7.5Z" fill="#7a7a7a"/><circle cx="8.4" cy="7.5" r="2.7" fill="#fff"/><circle cx="8.4" cy="7.5" r="1.4" fill="#7a7a7a"/></svg>
<svg class="abs" style="left:1326px;top:703px" width="18" height="18" viewBox="0 0 18 18"><g transform="translate(2.9 14.9) rotate(-44.5)" fill="#7a7a7a"><path d="M0 0 L3.4 -1.9 V1.9Z"/><rect x="4.1" y="-1.9" width="9.4" height="3.8"/><path d="M14.2 -1.9 H16.3 A1.9 1.9 0 0 1 16.3 1.9 H14.2Z"/></g></svg>
<svg class="abs" style="left:1353px;top:704px" width="17" height="16" viewBox="0 0 17 16"><path d="M1.8 7.5 C4 4.6 6 3.6 8.45 3.6 C10.9 3.6 12.9 4.6 15.1 7.5 C12.9 10.4 10.9 11.3 8.45 11.3 C6 11.3 4 10.4 1.8 7.5Z" fill="#7a7a7a"/><circle cx="8.4" cy="7.5" r="2.7" fill="#fff"/><circle cx="8.4" cy="7.5" r="1.4" fill="#7a7a7a"/></svg>
<svg class="abs" style="left:1326px;top:753px" width="18" height="18" viewBox="0 0 18 18"><g transform="translate(2.9 14.9) rotate(-44.5)" fill="#7a7a7a"><path d="M0 0 L3.4 -1.9 V1.9Z"/><rect x="4.1" y="-1.9" width="9.4" height="3.8"/><path d="M14.2 -1.9 H16.3 A1.9 1.9 0 0 1 16.3 1.9 H14.2Z"/></g></svg>
<svg class="abs" style="left:1353px;top:754px" width="17" height="16" viewBox="0 0 17 16"><path d="M1.8 7.5 C4 4.6 6 3.6 8.45 3.6 C10.9 3.6 12.9 4.6 15.1 7.5 C12.9 10.4 10.9 11.3 8.45 11.3 C6 11.3 4 10.4 1.8 7.5Z" fill="#7a7a7a"/><circle cx="8.4" cy="7.5" r="2.7" fill="#fff"/><circle cx="8.4" cy="7.5" r="1.4" fill="#7a7a7a"/></svg>
<svg class="abs" style="left:1326px;top:803px" width="18" height="18" viewBox="0 0 18 18"><g transform="translate(2.9 14.9) rotate(-44.5)" fill="#7a7a7a"><path d="M0 0 L3.4 -1.9 V1.9Z"/><rect x="4.1" y="-1.9" width="9.4" height="3.8"/><path d="M14.2 -1.9 H16.3 A1.9 1.9 0 0 1 16.3 1.9 H14.2Z"/></g></svg>
<svg class="abs" style="left:1353px;top:804px" width="17" height="16" viewBox="0 0 17 16"><path d="M1.8 7.5 C4 4.6 6 3.6 8.45 3.6 C10.9 3.6 12.9 4.6 15.1 7.5 C12.9 10.4 10.9 11.3 8.45 11.3 C6 11.3 4 10.4 1.8 7.5Z" fill="#7a7a7a"/><circle cx="8.4" cy="7.5" r="2.7" fill="#fff"/><circle cx="8.4" cy="7.5" r="1.4" fill="#7a7a7a"/></svg>
<div class="abs" style="left:1394px;top:725px;width:15px;height:3px;background:#e3303e"></div>
<div class="abs" style="left:1165px;top:737px;width:244px;height:53px;border-radius:11px;background:linear-gradient(100deg,#00f897 0%,#00f2a8 60%,#00e8c4 100%);box-shadow:0 3px 10px rgba(0,0,0,0.18)"></div>
<svg class="abs" style="left:1174px;top:748px" width="28" height="30" viewBox="0 0 28 30"><rect x="1" y="3" width="17" height="12" rx="1" fill="#133f9c"/><rect x="6.5" y="8" width="19" height="14" rx="1" fill="#133f9c" stroke="#00f59f" stroke-width="1.2"/><path d="M19 21 L22 25 L22 21Z" fill="#133f9c"/></svg>
<div class="t" style="left:1210.80px;top:755.30px;font-size:15px;color:#173f9f;transform:scaleX(1.0040);">Painel de</div>
<div class="t xb" style="left:1278.90px;top:755.30px;font-size:15px;font-weight:bold;color:#173f9f;transform:scaleX(1.1124);">atendimento</div>
</body></html>
